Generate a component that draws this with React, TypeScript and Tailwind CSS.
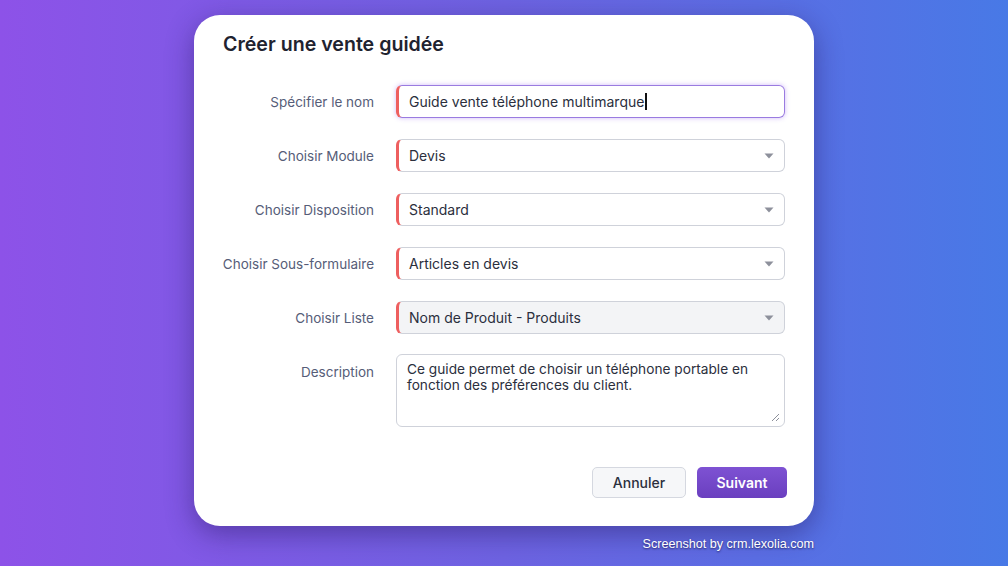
const rows = [
  { label: "Choisir Module", value: "Devis" },
  { label: "Choisir Disposition", value: "Standard" },
  { label: "Choisir Sous-formulaire", value: "Articles en devis" },
  { label: "Choisir Liste", value: "Nom de Produit - Produits", muted: true },
];

const Caret = () => (
  <svg width="10" height="6" viewBox="0 0 10 6" className="shrink-0">
    <path d="M0.5 0.5h9L5 5.5z" fill="#8d909b" />
  </svg>
);

const Label = ({ children }: { children: React.ReactNode }) => (
  <div className="flex h-[33px] items-center justify-end whitespace-nowrap pt-[2px] text-[13.5px] text-[#565d78]">{children}</div>
);

export default function App() {
  return (
    <div
      className="flex min-h-[566px] w-full flex-col items-center bg-[linear-gradient(90deg,#8d52e8_0%,#6e63e2_50%,#4879e6_100%)] pt-[15px]"
      style={{ fontFamily: "Inter, 'Noto Sans', sans-serif" }}
    >
      <div className="w-[620px] rounded-[26px] bg-white px-[29px] pt-[15px] pb-[28px] shadow-[0_8px_28px_rgba(35,20,90,0.45)]">
        <h1 className="text-[19.6px] leading-[28px] font-semibold text-[#1f2330]">Créer une vente guidée</h1>

        <div className="mt-[27px] grid grid-cols-[151px_389px] gap-x-[22px] gap-y-[21px]">
          <Label>Spécifier le nom</Label>
          <div className="flex h-[33px] items-center rounded-[6px] border border-[#9a7be0] border-l-[3px] border-l-[#ee5f5f] pl-[10px] text-[14px] text-[#2b2f3d] shadow-[0_0_5px_rgba(150,100,240,0.45)]">
            Guide vente téléphone multimarque
            <span className="ml-px inline-block h-[17px] w-[1.5px] bg-[#111]" />
          </div>

          {rows.map((r) => (
            <>
              <Label key={r.label + "l"}>{r.label}</Label>
              <div
                key={r.label}
                className={`flex h-[33px] items-center justify-between rounded-[6px] border border-[#cfd2da] border-l-[3px] border-l-[#ee5f5f] pr-[10px] pl-[10px] text-[14px] text-[#2b2f3d] ${
                  r.muted ? "bg-[#f3f4f6]" : "bg-white"
                }`}
              >
                <span>{r.value}</span>
                <Caret />
              </div>
            </>
          ))}

          <div className="flex justify-end pt-[7px] text-[13.5px] text-[#565d78]">Description</div>
          <div className="relative -mt-px h-[73px] rounded-[6px] border border-[#cfd2da] px-[10px] pt-[6px] text-[13.7px] leading-[16px] text-[#2b2f3d]">
            Ce guide permet de choisir un téléphone portable en fonction des préférences du client.
            <svg width="10" height="10" viewBox="0 0 10 10" className="absolute right-[4px] bottom-[4px]">
              <path d="M9 2L2 9M9 6L6 9" stroke="#8d909b" strokeWidth="1" />
            </svg>
          </div>
        </div>

        <div className="mt-[40px] flex justify-end gap-[11px]">
          <button className="h-[31px] w-[94px] rounded-[5px] border border-[#d5d8e0] bg-[#f6f7f9] text-[14px] font-medium text-[#2b2f3d]">
            Annuler
          </button>
          <button className="mr-[-2px] h-[31px] w-[90px] rounded-[5px] bg-[linear-gradient(180deg,#7e52d3,#6a3fbf)] text-[14px] font-semibold text-white">
            Suivant
          </button>
        </div>
      </div>

      <div
        className="mt-[9px] w-[620px] text-right text-[12.6px] text-white [text-shadow:0_1px_2px_rgba(20,10,60,0.7)]"
        style={{ fontFamily: "'Liberation Sans', Arial, sans-serif" }}
      >
        Screenshot by crm.lexolia.com
      </div>
    </div>
  );
}
